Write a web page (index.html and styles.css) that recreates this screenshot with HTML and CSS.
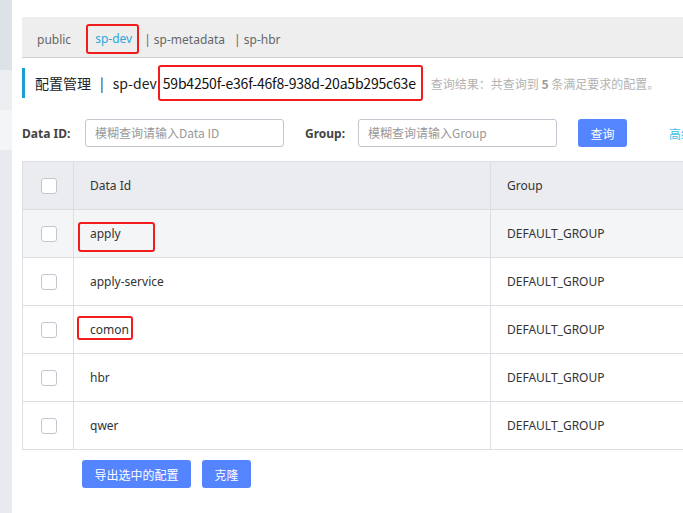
FILE: index.html
```html
<!DOCTYPE html>
<html lang="zh-CN">
<head>
<meta charset="utf-8">
<title>配置管理</title>
<link rel="stylesheet" href="styles.css">
</head>
<body>
<div class="page">
  <aside class="sidebar">
    <div class="seg seg-a"></div>
    <div class="seg seg-b"></div>
    <div class="seg seg-c"></div>
    <div class="seg seg-d"></div>
  </aside>
  <main class="main">
    <nav class="tabs">
      <span class="tab tab-first">public</span>
      <span class="tab tab-active">sp-dev</span>
      <span class="tab tab-meta">| sp-metadata</span>
      <span class="tab tab-hbr">| sp-hbr</span>
    </nav>

    <div class="title-row">
      <span class="title-bar"></span>
      <span class="title-text">配置管理<span class="pipe">|</span>sp-dev</span>
      <span class="ns-id">59b4250f-e36f-46f8-938d-20a5b295c63e</span>
      <span class="result">查询结果：共查询到 <b>5</b> 条满足要求的配置。</span>
    </div>

    <div class="search-row">
      <label class="label">Data ID:</label>
      <div class="input">模糊查询请输入Data ID</div>
      <label class="label label-group">Group:</label>
      <div class="input">模糊查询请输入Group</div>
      <button class="btn btn-query">查询</button>
      <span class="adv">高级查询</span>
    </div>

    <table class="table">
      <thead>
        <tr>
          <th class="col-check"><span class="checkbox"></span></th>
          <th class="col-id">Data Id</th>
          <th class="col-group">Group</th>
        </tr>
      </thead>
      <tbody>
        <tr class="hover">
          <td class="col-check"><span class="checkbox"></span></td>
          <td class="col-id"><div class="cell">apply<span class="mark mark-apply"></span></div></td>
          <td class="col-group">DEFAULT_GROUP</td>
        </tr>
        <tr>
          <td class="col-check"><span class="checkbox"></span></td>
          <td class="col-id">apply-service</td>
          <td class="col-group">DEFAULT_GROUP</td>
        </tr>
        <tr>
          <td class="col-check"><span class="checkbox"></span></td>
          <td class="col-id"><div class="cell">comon<span class="mark mark-comon"></span></div></td>
          <td class="col-group">DEFAULT_GROUP</td>
        </tr>
        <tr>
          <td class="col-check"><span class="checkbox"></span></td>
          <td class="col-id">hbr</td>
          <td class="col-group">DEFAULT_GROUP</td>
        </tr>
        <tr>
          <td class="col-check"><span class="checkbox"></span></td>
          <td class="col-id">qwer</td>
          <td class="col-group">DEFAULT_GROUP</td>
        </tr>
      </tbody>
    </table>

    <div class="actions">
      <button class="btn btn-export">导出选中的配置</button>
      <button class="btn btn-clone">克隆</button>
    </div>
  </main>
</div>
</body>
</html>
```

FILE: styles.css
```css
html, body {
  margin: 0;
  padding: 0;
  background: #ffffff;
  overflow: hidden;
}
body {
  font-family: "Noto Sans", "Noto Sans CJK SC", sans-serif;
  font-size: 12px;
  color: #333333;
}
.page {
  display: flex;
  width: 1000px;
  height: 513px;
}
.sidebar {
  width: 12px;
  flex: none;
  display: flex;
  flex-direction: column;
}
.seg-a { height: 70px; background: #dde1e8; }
.seg-b { height: 40px; background: #eceef2; }
.seg-c { height: 40px; background: #f4f5f7; }
.seg-d { flex: 1; background: #e8eaef; }

.main {
  flex: 1;
  padding: 17px 0 0 10px;
}

/* tabs */
.tabs {
  display: flex;
  align-items: center;
  box-sizing: border-box;
  height: 41px;
  padding-top: 4px;
  background: #eeeeee;
  border-bottom: 1px solid #d2d2d2;
  padding-left: 15px;
  color: #666666;
}
.tab { white-space: nowrap; }
.tab-active {
  margin-left: 15px;
  color: #2fa6d8;
  border: 2px solid #f21c1c;
  border-radius: 3px;
  padding: 0 5px 0 7px;
  height: 26px;
  line-height: 26px;
}
.tab-meta { margin-left: 5px; }
.tab-hbr { margin-left: 9px; }

/* title row */
.title-row {
  display: flex;
  align-items: center;
  margin-top: 7px;
  height: 36px;
  white-space: nowrap;
}
.title-bar {
  width: 3px;
  height: 30px;
  background: #1a9fd3;
  margin-right: 10px;
}
.title-text {
  font-family: "Noto Sans CJK SC", sans-serif;
  font-size: 14px;
  color: #222222;
}
.pipe {
  margin: 0 9px 0 9px;
}
.ns-id {
  margin-left: 1px;
  border: 2px solid #f21c1c;
  border-radius: 3px;
  padding: 0 5px 0 3px;
  height: 32px;
  line-height: 32px;
  font-family: "Noto Sans CJK SC", sans-serif;
  font-size: 14px;
  letter-spacing: -0.2px;
  color: #111111;
}
.result {
  margin-left: 8px;
  color: #b3b3b3;
  font-family: "Noto Sans CJK SC", sans-serif;
  font-size: 12px;
}
.result b { color: #999999; }

/* search row */
.search-row {
  display: flex;
  align-items: center;
  margin-top: 18px;
  height: 28px;
  white-space: nowrap;
}
.label {
  font-weight: bold;
  color: #444444;
  width: 63px;
}
.label-group {
  margin-left: 21px;
  width: 53px;
}
.input {
  box-sizing: border-box;
  width: 199px;
  height: 28px;
  line-height: 26px;
  border: 1px solid #c4c6cf;
  border-radius: 3px;
  padding-left: 9px;
  color: #999999;
  font-family: "Noto Sans CJK SC", sans-serif;
}
.btn {
  border: none;
  border-radius: 3px;
  background: #5584ff;
  color: #ffffff;
  font-family: "Noto Sans CJK SC", sans-serif;
  font-size: 12px;
  height: 28px;
  padding: 0;
  cursor: pointer;
}
.btn-query {
  margin-left: 21px;
  width: 49px;
}
.adv {
  margin-left: 42px;
  color: #3ec4e6;
  font-family: "Noto Sans CJK SC", sans-serif;
}

/* table */
.table {
  margin-top: 14px;
  border-collapse: collapse;
  width: 900px;
  table-layout: fixed;
}
.table th, .table td {
  border: 1px solid #dcdee3;
  height: 48px;
  padding: 0 0 0 16px;
  text-align: left;
  font-weight: normal;
  color: #333333;
  box-sizing: border-box;
}
.table thead th {
  background: #ebecf0;
}
.table tr.hover td {
  background: #f4f5f7;
}
.table .col-check {
  width: 51px;
  padding: 0;
  text-align: center;
}
.table .col-id { width: 417px; }
.checkbox {
  display: inline-block;
  box-sizing: border-box;
  width: 16px;
  height: 16px;
  border: 1px solid #c4c6cf;
  border-radius: 3px;
  background: #ffffff;
  vertical-align: middle;
  margin-left: 1px;
}
.cell {
  position: relative;
}
.mark {
  position: absolute;
  border: 2px solid #f21c1c;
  border-radius: 3px;
}
.mark-apply {
  left: -12px;
  top: -3px;
  width: 73px;
  height: 26px;
}
.mark-comon {
  left: -13px;
  top: -5px;
  width: 52px;
  height: 20px;
}

/* actions */
.actions {
  display: flex;
  gap: 11px;
  margin: 10px 0 0 60px;
}
.btn-export { width: 109px; }
.btn-clone { width: 49px; }
```
